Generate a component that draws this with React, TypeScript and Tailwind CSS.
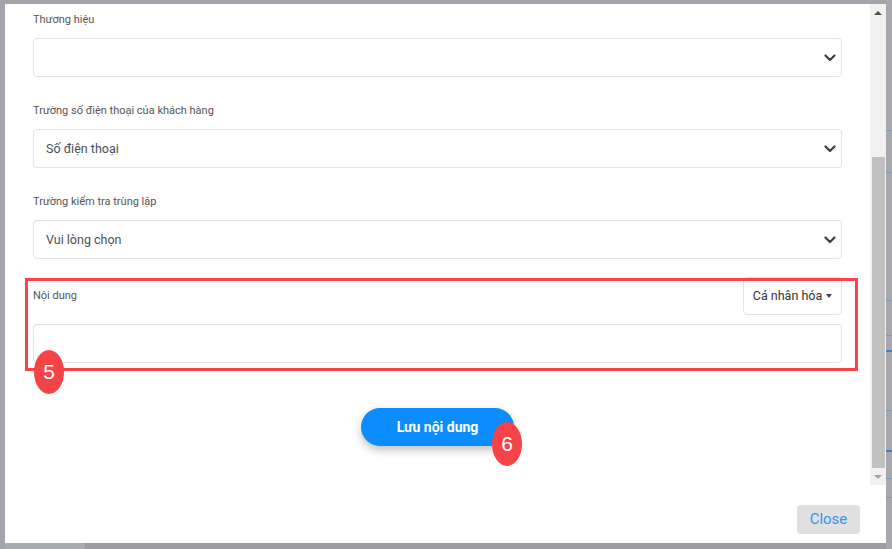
const font = { fontFamily: '"Segoe UI", Roboto, "Noto Sans", Arial, sans-serif' }

function Chevron() {
  return (
    <svg width="12" height="8" viewBox="0 0 12 8" className="shrink-0">
      <path d="M1.5 1.5 6 6l4.5-4.5" fill="none" stroke="#3a3f44" strokeWidth="2.2" strokeLinecap="round" strokeLinejoin="round" />
    </svg>
  )
}

function SelectField({ label, value }: { label: string; value?: string }) {
  return (
    <div className="mb-[25px]">
      <div className="text-[11px] leading-[18px] text-[#555] mb-[9px]">{label}</div>
      <div className="h-[39px] rounded-[4px] border border-[#e3e3e3] bg-white flex items-center justify-between pl-[12px] pr-[5px]">
        <span className="text-[12.5px] text-[#495057] pt-px">{value}</span>
        <Chevron />
      </div>
    </div>
  )
}

function Badge({ n }: { n: number }) {
  return (
    <div className="w-[30px] h-[44px] rounded-[50%] bg-[#f54447] text-white text-[21px] flex items-center justify-center" style={{ fontFamily: 'Arial, "Liberation Sans", sans-serif' }}>
      {n}
    </div>
  )
}

function Scrollbar() {
  return (
    <div className="w-[16px] bg-[#f1f1f1] flex flex-col items-center">
      <div className="h-[17px] flex items-center justify-center">
        <div className="w-0 h-0 border-l-[4px] border-r-[4px] border-b-[4px] border-l-transparent border-r-transparent border-b-[#505050]" />
      </div>
      <div className="h-[136px]" />
      <div className="w-[13px] h-[311px] bg-[#c1c1c1]" />
      <div className="flex-1 flex items-center justify-center">
        <div className="w-0 h-0 border-l-[4px] border-r-[4px] border-t-[4px] border-l-transparent border-r-transparent border-t-[#a3a3a3]" />
      </div>
    </div>
  )
}

// strip of the page behind the backdrop, visible to the right of the dialog
const backLines = [130, 172, 300, 335, 410, 478, 497]

export default function App() {
  return (
    <div className="w-[892px] h-[549px] bg-[#a3a5aa] flex overflow-hidden" style={font}>
      <div className="w-[5px] shrink-0" />
      <div className="flex flex-col shrink-0">
        <div className="h-[4px]" />
        <div className="w-[881px] h-[539px] bg-white flex flex-col">
          <div className="h-[481px] flex">
            <div className="flex-1 px-[28px] pt-[7px] relative">
              <SelectField label="Thương hiệu" />
              <SelectField label="Trường số điện thoại của khách hàng" value="Số điện thoại" />
              <SelectField label="Trường kiểm tra trùng lặp" value="Vui lòng chọn" />

              <div className="-mt-[7px]">
                <div className="h-[38px] flex items-center justify-between">
                  <span className="text-[11px] text-[#555]">Nội dung</span>
                  <button className="w-[99px] h-[38px] rounded-[4px] border border-[#e3e3e3] bg-white flex items-center justify-center gap-[4px] text-[12.5px] text-[#333]">
                    Cá nhân hóa
                    <span className="w-0 h-0 border-l-[3px] border-r-[3px] border-t-[4px] border-l-transparent border-r-transparent border-t-[#444]" />
                  </button>
                </div>
                <div className="mt-[9px] h-[39px] rounded-[4px] border border-[#e3e3e3] bg-white" />
              </div>

              <div className="mt-[45px] flex justify-center">
                <div className="relative">
                  <button className="w-[153px] h-[38px] rounded-full bg-[#0b8cff] text-white text-[14px] font-bold shadow-[0_4px_8px_rgba(0,0,0,0.25)]">
                    Lưu nội dung
                  </button>
                  <div className="absolute left-[131px] top-[14px]">
                    <Badge n={6} />
                  </div>
                </div>
              </div>

              {/* highlight frame around the content field */}
              <div className="absolute left-[20px] top-[274px] w-[833px] h-[93px] border-[3px] border-[#f5444a] pointer-events-none" />
              <div className="absolute left-[29px] top-[346px]">
                <Badge n={5} />
              </div>
            </div>
            <Scrollbar />
          </div>
          <div className="flex-1 flex items-start justify-end pr-[26px] pt-[20px]">
            <button className="w-[63px] h-[29px] rounded-[4px] bg-[#e0e0e0] text-[#2f95f5] text-[15px]" style={{ fontFamily: 'Roboto, Arial, sans-serif' }}>
              Close
            </button>
          </div>
        </div>
        <div className="flex-1 flex">
          <div className="w-[80px] bg-[#a8acb0]" />
          <div className="flex-1 bg-[#9c9ca2]" />
        </div>
      </div>
      <div className="flex-1 relative bg-[#a6a8ad]">
        {backLines.map((y) => (
          <div key={y} className="absolute left-0 right-0 h-px bg-[#7d9bbf]" style={{ top: y }} />
        ))}
        <div className="absolute left-0 right-0 h-[2px] bg-[#3f7fc4]" style={{ top: 350 }} />
        <div className="absolute left-0 right-0 h-[2px] bg-[#3f7fc4]" style={{ top: 450 }} />
      </div>
    </div>
  )
}
